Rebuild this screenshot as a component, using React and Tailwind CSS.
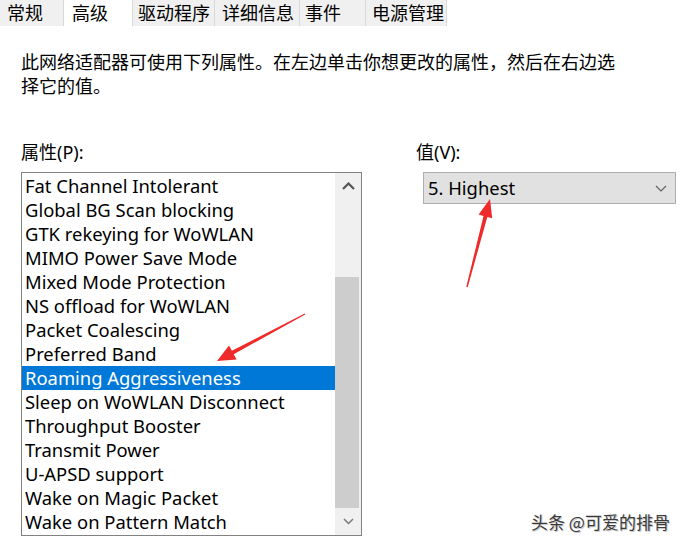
import React from "react";

const tabs = [
  { label: "常规", w: "w-[64px]", pl: "pl-[7px]", sel: false },
  { label: "高级", w: "w-[69px]", pl: "pl-[8px]", sel: true },
  { label: "驱动程序", w: "w-[82px]", pl: "pl-[5px]", sel: false },
  { label: "详细信息", w: "w-[85px]", pl: "pl-[7px]", sel: false },
  { label: "事件", w: "w-[66px]", pl: "pl-[5px]", sel: false },
  { label: "电源管理", w: "w-[81px]", pl: "pl-[6px]", sel: false },
];

const items = [
  "Fat Channel Intolerant",
  "Global BG Scan blocking",
  "GTK rekeying for WoWLAN",
  "MIMO Power Save Mode",
  "Mixed Mode Protection",
  "NS offload for WoWLAN",
  "Packet Coalescing",
  "Preferred Band",
  "Roaming Aggressiveness",
  "Sleep on WoWLAN Disconnect",
  "Throughput Booster",
  "Transmit Power",
  "U-APSD support",
  "Wake on Magic Packet",
  "Wake on Pattern Match",
];

export default function App() {
  return (
    <div className="relative w-[690px] h-[547px] overflow-hidden bg-white text-black font-['Noto_Sans','Noto_Sans_CJK_SC',sans-serif] text-[18px]">
      {/* Tabs */}
      <div className="flex h-[26px]">
        {tabs.map((t) => (
          <div
            key={t.label}
            className={`${t.w} ${t.pl} flex items-center border-r border-[#d9d9d9] leading-none ${
              t.sel ? "bg-white" : "bg-[#f0f0f0]"
            }`}
          >
            {t.label}
          </div>
        ))}
      </div>

      {/* Description */}
      <p className="mt-[24px] pl-[21px] pr-[60px] leading-[24px]">
        此网络适配器可使用下列属性。在左边单击你想更改的属性，然后在右边选
        <br />
        择它的值。
      </p>

      {/* Properties / Value */}
      <div className="flex mt-[42px]">
        <div className="ml-[21px] w-[341px] flex flex-col">
          <div className="leading-[24px] h-[24px]">属性(P):</div>
          <div className="mt-[8px] h-[364px] border border-[#828282] flex">
            <div className="flex-1 pt-[1px] flex flex-col text-[18.4px]">
              {items.map((it) => {
                const sel = it === "Roaming Aggressiveness";
                return (
                  <div
                    key={it}
                    className={`h-[24px] leading-[24px] pl-[3px] whitespace-nowrap ${
                      sel ? "bg-[#0078d7] text-white" : ""
                    }`}
                  >
                    {it}
                  </div>
                );
              })}
            </div>
            <div className="w-[26px] bg-[#f0f0f0] flex flex-col">
              <div className="h-[25px] flex items-center justify-center pt-[1px]">
                <svg width="13" height="8" viewBox="0 0 13 8">
                  <path d="M1 7 L6.5 1.5 L12 7" fill="none" stroke="#555555" strokeWidth="2.2" />
                </svg>
              </div>
              <div className="flex-1 pt-[79px] pr-[2px]">
                <div className="h-[231px] bg-[#cdcdcd]" />
              </div>
              <div className="h-[27px] flex items-center justify-center">
                <svg width="11" height="7" viewBox="0 0 11 7">
                  <path d="M1 1 L5.5 5.5 L10 1" fill="none" stroke="#7a7a7a" strokeWidth="1.5" />
                </svg>
              </div>
            </div>
          </div>
        </div>

        <div className="ml-[54px] flex flex-col">
          <div className="leading-[24px] h-[24px]">值(V):</div>
          <div className="mt-[8px] ml-[7px] w-[253px] h-[32px] border border-[#adadad] bg-[#e1e1e1] flex items-center justify-between pl-[4px] pr-[8px] text-[18.4px]">
            <span>5. Highest</span>
            <svg width="12" height="7" viewBox="0 0 12 7">
              <path d="M1 1 L6 6 L11 1" fill="none" stroke="#606060" strokeWidth="1.2" />
            </svg>
          </div>
        </div>
      </div>

      {/* Annotation arrows */}
      <svg className="absolute left-0 top-0 pointer-events-none" width="690" height="547">
        <polygon
          points="305.2,314.4 233.7,354.3 236.6,359.5 217,361 229,345.5 231.9,350.7 304.8,313.6"
          fill="#ee2a2a"
        />
        <polygon
          points="467.7,287.2 487.3,216.9 492.2,218.2 490,199 478.6,214.6 483.5,215.9 466.3,286.8"
          fill="#ee2a2a"
        />
      </svg>

      {/* Watermark */}
      <div className="absolute left-[531px] top-[510px] text-[17px] leading-[24px] text-[#3a3a3a] font-['Noto_Sans_CJK_SC',sans-serif] [text-shadow:1px_1px_0_#c8c8c8]">
        头条 @可爱的排骨
      </div>
    </div>
  );
}
